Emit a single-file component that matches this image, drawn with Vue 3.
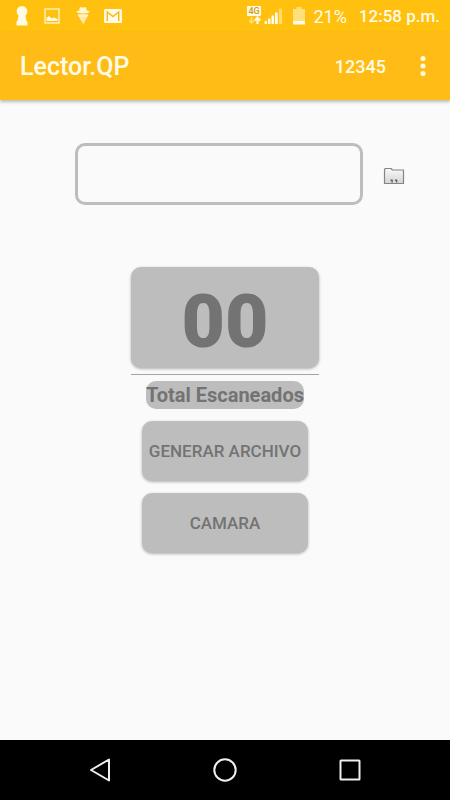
<template>
  <div class="screen">
    <div class="status">
      <div class="status-side">
        <svg class="ico-key" width="12" height="20" viewBox="0 0 12 20">
          <path fill="#fffbe6" d="M6 .3c3.200 0 5.300 2 5.300 5 0 2-.8 3.300-1.800 4.200l.9 5.200c.8.3 1.100.8 1.100 1.800V19.500H.5V16.500c0-1 .3-1.500 1.100-1.800l.9-5.200C1.500 8.600.7 7.300.7 5.300c0-3 2.100-5 5.300-5z" />
        </svg>
        <svg class="ico-pic" width="16" height="16" viewBox="0 0 16 16">
          <rect x="1" y="1" width="14" height="14" fill="none" stroke="#fff0b0" stroke-width="1.500" />
          <path fill="#fffbe6" d="M2.500 13V10L5 8l2.500 2.500 2.500-1 3.500 1.500v2z" />
        </svg>
        <svg class="ico-cone" width="14" height="20" viewBox="0 0 14 20">
          <path fill="#fff6cf" d="M3.300 4.500C3.500 1.500 4.500.8 5.700 1.200L7 1.800l1.300-.6c1.300-.4 2.200.4 2.400 3.300l2.800.8c.4 1.400-2.600 2.200-6.500 2.200S.200 6.700.600 5.300z" />
          <path fill="#ffe9a0" d="M1.500 8.500h11L7.300 18.500z" />
          <path fill="#fff6cf" d="M2 8.500h10l-1 2.500H8.200L7 10l-1.200 1H3z" />
        </svg>
        <svg class="ico-mail" width="18" height="14" viewBox="0 0 18 14">
          <rect width="18" height="14" rx="1.500" fill="#fffbe6" />
          <path fill="none" stroke="#fbb917" stroke-width="1.500" d="M3.300 12V3L9 7.500 14.700 3V12" />
        </svg>
      </div>
      <div class="status-side">
        <svg width="36" height="20" viewBox="0 0 36 20">
          <rect width="14" height="10" rx="1" fill="#fffbe6" />
          <text x="7" y="8" text-anchor="middle" class="net">4G</text>
          <path fill="none" stroke="#ffe285" stroke-width="1.500" d="M4.500 11v6M2.200 14.500L4.500 17l2.200-2.500" />
          <path fill="none" stroke="#fffbe6" stroke-width="2" d="M10.500 18v-6M7.700 14.500L10.500 11.500l2.800 3" />
          <path fill="#fffbe6" d="M17.500 15h2.500v3h-2.500zM21 12.500h2.500V18H21zM24.500 9.500H27V18h-2.500zM28 6.500h2.800V18H28z" />
          <path fill="#ffdb70" d="M32 2.500h3V18h-3z" />
        </svg>
        <svg class="ico-bat" width="12" height="18" viewBox="0 0 12 18">
          <path fill="#ffdf7c" d="M3.500 0h5v2H12v12H0V2h3.500z" />
          <path fill="#fffbe6" d="M0 14h12v3.500H0z" />
        </svg>
        <span class="percent">21%</span>
        <span class="clock">12:58 p.m.</span>
      </div>
    </div>

    <header class="bar">
      <h1>Lector.QP</h1>
      <button class="code" type="button">12345</button>
      <button class="more" type="button" aria-label="Menu">
        <svg width="6" height="20" viewBox="0 0 6 20">
          <circle v-for="y in [2.500, 10, 17.500]" :key="y" cx="3" :cy="y" r="2.500" fill="#fffbe6" />
        </svg>
      </button>
    </header>

    <main>
      <div class="entry">
        <input v-model="codigo" type="text" aria-label="Codigo" />
        <button class="folder" type="button" aria-label="Abrir archivo">
          <svg width="22" height="18" viewBox="0 0 22 18">
            <defs>
              <linearGradient id="paper" x1="0" y1="0" x2="0" y2="1">
                <stop offset="0" stop-color="#fafafa" />
                <stop offset="1" stop-color="#d4d4d4" />
              </linearGradient>
            </defs>
            <path fill="url(#paper)" stroke="#858585" stroke-width="1.200" stroke-linejoin="round" d="M1.500 16.500V2.500L2.500 1.500H8L9.500 3H20.500V16.500z" />
            <path fill="#606060" d="M7.500 12.500h2.300v3H8.500v-1.500h-1zM12 12.500h2.300v3H13v-1.500h-1z" />
          </svg>
        </button>
      </div>

      <div class="counter">
        <div class="total">{{ total }}</div>
      </div>
      <div class="label">Total Escaneados</div>
      <button v-for="a in acciones" :key="a" class="action" type="button">{{ a }}</button>
    </main>

    <nav>
      <button type="button" aria-label="Atras">
        <svg width="26" height="26" viewBox="0 0 26 26">
          <path d="M22 2.500V23.500L4 13z" />
        </svg>
      </button>
      <button type="button" aria-label="Inicio">
        <svg width="26" height="26" viewBox="0 0 26 26">
          <circle cx="13" cy="13" r="10.700" />
        </svg>
      </button>
      <button type="button" aria-label="Recientes">
        <svg width="26" height="26" viewBox="0 0 26 26">
          <rect x="3.500" y="3.500" width="19" height="19" rx="0.500" />
        </svg>
      </button>
    </nav>
  </div>
</template>

<script setup>
import { ref, computed } from "vue";

const codigo = ref("");
const escaneados = ref(0);
const acciones = ["GENERAR ARCHIVO", "CAMARA"];

const total = computed(() => String(escaneados.value).padStart(2, "0"));
</script>

<style>
body {
  background: #fafafa;
}
</style>

<style scoped>
.screen {
  display: flex;
  flex-direction: column;
  min-height: 100vh;
  font-family: Roboto, "Liberation Sans", sans-serif;
  background: #fafafa;
}

button {
  padding: 0;
  border: 0;
  background: none;
  font-family: inherit;
  cursor: pointer;
}

svg {
  display: block;
}

.status {
  display: flex;
  justify-content: space-between;
  height: 32px;
  padding: 0 10px 0 16px;
  background: #ffc010;
  color: #fffbe6;
}

.status-side {
  display: flex;
  align-items: center;
}

.ico-pic {
  margin-left: 16px;
}

.ico-cone {
  margin-left: 16px;
}

.ico-mail {
  margin-left: 14px;
}

.net {
  font-size: 9px;
  font-weight: 500;
  fill: #d09a10;
}

.ico-bat {
  margin-left: 10px;
}

.percent {
  margin-left: 8px;
  font-size: 18px;
}

.clock {
  margin-left: 12px;
  font-size: 17px;
  font-weight: 500;
}

.bar {
  display: flex;
  align-items: center;
  height: 68px;
  padding: 0 24px 0 20px;
  background: #ffbc17;
  box-shadow: 0 2px 3px rgba(0, 0, 0, 0.25);
  color: #fffbe6;
}

h1 {
  flex: 1;
  margin: 0;
  font-size: 25px;
  font-weight: 500;
}

.code {
  color: inherit;
  font-size: 18px;
  font-weight: 500;
}

.more {
  margin-left: 34px;
}

main {
  flex: 1;
  display: flex;
  flex-direction: column;
  align-items: center;
  padding-top: 43px;
}

.entry {
  display: flex;
  align-items: center;
  align-self: stretch;
  gap: 20px;
  margin-bottom: 62px;
  padding: 0 45px 0 75px;
}

.entry input {
  flex: 1;
  min-width: 0;
  height: 62px;
  box-sizing: border-box;
  padding: 0 12px;
  border: 3px solid #bdbdbd;
  border-radius: 10px;
  background: transparent;
  font-family: inherit;
  font-size: 20px;
  outline: none;
}

.folder {
  margin-top: 4px;
}

.counter {
  padding-bottom: 6px;
  border-bottom: 1px solid #a4a4a4;
}

.total {
  width: 188px;
  height: 101px;
  padding-top: 8px;
  box-sizing: border-box;
  border-radius: 10px;
  background: #bdbdbd;
  box-shadow: 0 1px 3px rgba(0, 0, 0, 0.3);
  color: #737373;
  font-size: 75px;
  font-weight: 900;
  line-height: 93px;
  text-align: center;
}

.label {
  margin-top: 6px;
  border-radius: 10px;
  background: #bdbdbd;
  color: #737373;
  font-size: 20px;
  font-weight: 700;
  line-height: 28px;
}

.action {
  width: 166px;
  height: 60px;
  margin-top: 12px;
  border-radius: 10px;
  background: #bdbdbd;
  box-shadow: 0 1px 3px rgba(0, 0, 0, 0.3);
  color: #737373;
  font-size: 17px;
  font-weight: 500;
  white-space: nowrap;
}

nav {
  display: flex;
  justify-content: center;
  align-items: center;
  gap: 99px;
  height: 60px;
  background: #000;
}

nav svg {
  fill: none;
  stroke: #eee;
  stroke-width: 2;
  stroke-linejoin: round;
}
</style>
